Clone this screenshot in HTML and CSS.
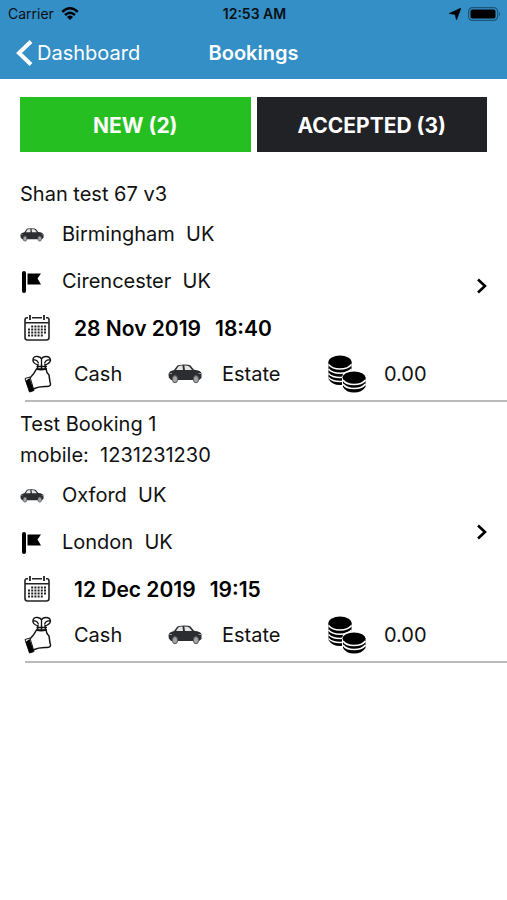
FILE: index.html
```html
<!DOCTYPE html>
<html lang="en">
<head>
<meta charset="utf-8">
<meta name="viewport" content="width=device-width, initial-scale=1">
<title>Bookings</title>
<link rel="stylesheet" href="styles.css">
</head>
<body>
<svg class="sprite" aria-hidden="true">
  <symbol id="car" viewBox="0 0 34 20">
    <path d="M.5 10Q1 7 6 6L9 2Q10 .5 16 .5Q21 .5 22.500 1.500L26 5.800Q33 6.500 33.500 9.500V14L31 16H3L.8 13.500Z" fill="#2b2d31"/>
    <path d="M8 6L10.300 2.500Q11 1.700 14.500 1.500L15 6ZM16.300 1.500Q20 1.500 21.300 2.500L24 6H17Z" fill="#e4e4e4"/>
    <path d="M1.500 9.500H4M30.500 9.500H33" stroke="#999"/>
    <ellipse cx="7" cy="15.200" rx="2.600" ry="3.600" fill="#a5a5a5" stroke="#55575a"/>
    <ellipse cx="28" cy="15.200" rx="2.600" ry="3.600" fill="#a5a5a5" stroke="#55575a"/>
  </symbol>
  <symbol id="flag" viewBox="0 0 20 22">
    <rect width="4" height="22" rx="2"/>
    <path d="M5.500 2.500H19L15.500 7.500L19 13.500H5.500Z"/>
  </symbol>
  <symbol id="calendar" viewBox="0 0 26 26">
    <path d="M4 2.800H3Q1 2.800 1 5V22.500Q1 25 3.500 25H22.500Q25 25 25 22.500V5Q25 2.800 23 2.800H22M8 2.800H18M1 7.800H25" fill="none" stroke="#222" stroke-width="1.600"/>
    <path d="M6 0V5M20 0V5" stroke="#222" stroke-width="1.800"/>
    <path d="M7.200 11.500H22.400M4 14.500H22.400M4 17.500H22.400M4 20.500H19" stroke="#222" stroke-width="1.900" stroke-dasharray="2 1.200"/>
  </symbol>
  <symbol id="cash" viewBox="0 0 28 38">
    <path d="M14 10Q8 8 9 4Q10 1 13.500 1.500Q17 2 17.500 4Q18.500 1.500 22 1.500Q26 1.500 26.500 5Q26.500 8 21 10M9 5Q13 4 14.500 8.500M17.500 4V9M26 5Q22 4 20.500 8.500" fill="none" stroke="#111" stroke-width="1.300"/>
    <path d="M14 9L13.500 14M21 9L21.500 14M17.500 9V14M12.500 11.500H23M13 14H23" stroke="#111" stroke-width="1.500"/>
    <path d="M6 23Q10 19 12.500 14Q17 15.500 22 14Q22.500 18 25 20L26 27Q28 31.500 23 31.500Q15 31 9 34" fill="#fff" stroke="#111" stroke-width="1.500"/>
    <path d="M1 23.500L6 22L10 35.500L5.500 37Z" fill="#fff" stroke="#111"/>
    <path d="M1.500 26L5.500 23L10 35.500L5.500 37Z"/>
  </symbol>
  <symbol id="coins" viewBox="0 0 38 38">
    <path d="M.5 6.500V24Q4 30 12 30Q20 30 23.500 24V6.500Z"/>
    <ellipse cx="12" cy="7" rx="11.500" ry="6.500"/>
    <path d="M.5 9.500Q4 14 12 14T23.500 9.500M.5 14Q4 18.300 12 18.300T23.500 14M.5 18.500Q4 22.500 12 22.500T23.500 18.500M.5 22.500Q4 26.500 12 26.500T23.500 22.500" fill="none" stroke="#fff" stroke-width="1.500"/>
    <path d="M14 22.500Q14 15 25.500 15T38 22.500V38H14Z" fill="#fff"/>
    <path d="M15 22.500V32Q18 37.500 26 37.500T37.500 32V22.500Z"/>
    <ellipse cx="26" cy="22.500" rx="11.500" ry="6"/>
    <path d="M15 25Q18 29.500 26 29.500T37.500 25M15 29Q18 33.500 26 33.500T37.500 29" fill="none" stroke="#fff" stroke-width="1.600"/>
  </symbol>
  <symbol id="next" viewBox="0 0 12 16">
    <path d="M2 1.500L9 8L2 14.500" fill="none" stroke="#000" stroke-width="2.600"/>
  </symbol>
</svg>

<header class="header">
  <div class="status">
    <span class="carrier">Carrier
      <svg width="18" height="13" viewBox="0 0 18 13" aria-hidden="true"><path d="M1.200 4.800Q9-2.200 16.800 4.800M4 8Q9 3.500 14 8" fill="none" stroke="#000" stroke-width="2.400"/><path d="M6 10Q9 7.200 12 10L9 13Z"/></svg>
    </span>
    <span class="time">12:53 AM</span>
    <span class="power">
      <svg width="12" height="12" viewBox="0 0 12 12" aria-hidden="true"><path d="M12 0L7.500 12L6 6.500L0 5.500Z" stroke="#000" stroke-width=".5"/></svg>
      <svg width="33" height="14" viewBox="0 0 33 14" aria-hidden="true"><rect x=".6" y=".6" width="29" height="12.800" rx="4" fill="none" stroke="#1c5577" stroke-width="1.200"/><rect x="2.500" y="2.500" width="25" height="9" rx="1.800"/><path d="M31 4.500Q33 7 31 9.500Z" fill="#1c5577"/></svg>
    </span>
  </div>
  <nav class="nav">
    <a class="back" href="#dashboard">
      <svg width="17" height="26" viewBox="0 0 17 26" aria-hidden="true"><path d="M15 1.500L3 13L15 24.500" fill="none" stroke="#fff" stroke-width="4"/></svg>
      Dashboard
    </a>
    <h1 class="title">Bookings</h1>
  </nav>
</header>

<main>
  <div class="tabs">
    <button class="tab tab-new" type="button">NEW (2)</button>
    <button class="tab tab-accepted" type="button">ACCEPTED (3)</button>
  </div>

  <article class="booking">
    <div class="details">
      <div class="name">Shan test 67 v3</div>
      <div class="rows">
        <div class="row place"><svg class="car-small"><use href="#car"/></svg><span>Birmingham&nbsp; UK</span></div>
        <div class="row place"><svg class="flag"><use href="#flag"/></svg><span>Cirencester&nbsp; UK</span></div>
        <div class="row when"><svg class="calendar"><use href="#calendar"/></svg><span>28 Nov 2019</span><span>18:40</span></div>
        <div class="row facts">
          <svg class="cash"><use href="#cash"/></svg><span>Cash</span>
          <svg class="car"><use href="#car"/></svg><span>Estate</span>
          <svg class="coins"><use href="#coins"/></svg><span>0.00</span>
        </div>
      </div>
    </div>
    <a class="next" href="#booking-1" aria-label="Open booking"><svg><use href="#next"/></svg></a>
  </article>

  <article class="booking">
    <div class="details">
      <div class="name">Test Booking 1</div>
      <div class="name">mobile:&nbsp; 1231231230</div>
      <div class="rows">
        <div class="row place"><svg class="car-small"><use href="#car"/></svg><span>Oxford&nbsp; UK</span></div>
        <div class="row place"><svg class="flag"><use href="#flag"/></svg><span>London&nbsp; UK</span></div>
        <div class="row when"><svg class="calendar"><use href="#calendar"/></svg><span>12 Dec 2019</span><span>19:15</span></div>
        <div class="row facts">
          <svg class="cash"><use href="#cash"/></svg><span>Cash</span>
          <svg class="car"><use href="#car"/></svg><span>Estate</span>
          <svg class="coins"><use href="#coins"/></svg><span>0.00</span>
        </div>
      </div>
    </div>
    <a class="next" href="#booking-2" aria-label="Open booking"><svg><use href="#next"/></svg></a>
  </article>
</main>
</body>
</html>
```
FILE: styles.css
```css
* { box-sizing: border-box; }

body {
  margin: 0;
  background: #fff;
  color: #111;
  font: 20px/31px Inter, "Liberation Sans", sans-serif;
}

svg { display: block; flex: none; }
.sprite { display: none; }

.header { background: #348fc6; color: #fff; }

.status {
  display: grid;
  grid-template-columns: 1fr auto 1fr;
  align-items: center;
  height: 27px;
  padding: 0 6px 0 8px;
  color: #0a1014;
  font-size: 14px;
  line-height: 20px;
}
.carrier, .power { display: flex; align-items: center; gap: 7px; }
.power { justify-content: flex-end; }
.time { font-weight: 600; }

.nav {
  display: grid;
  grid-template-columns: 1fr auto 1fr;
  align-items: center;
  height: 52px;
  padding: 0 16px;
}
.back {
  display: flex;
  align-items: center;
  gap: 4px;
  color: #fff;
  text-decoration: none;
}
.title { margin: 0; font-size: 20px; font-weight: 600; }

.tabs {
  display: grid;
  grid-template-columns: 1fr 1fr;
  gap: 6px;
  padding: 18px 20px 20px;
}
.tab {
  height: 55px;
  border: 0;
  padding: 2px 0 0;
  color: #fff;
  font: inherit;
  font-size: 21px;
  font-weight: 700;
}
.tab-new { background: #26bf21; }
.tab-accepted { background: #202226; }

.booking {
  display: flex;
  align-items: center;
  margin-left: 25px;
  padding: 7px 19px 3px 0;
  border-bottom: 2px solid #bbb;
}
.details { flex: 1; margin-left: -5px; }
.rows { margin-top: 1px; }
.row { display: grid; align-items: center; height: 46px; }
.place { grid-template-columns: 42px 1fr; height: 47px; }
.when {
  grid-template-columns: 50px auto 1fr;
  padding-left: 4px;
  color: #000;
  font-size: 21px;
  font-weight: 600;
}
.when span + span { margin-left: 14px; }
.facts {
  grid-template-columns: 50px 94px 54px 106px 56px 1fr;
  padding-left: 4px;
}

.car-small { width: 24px; height: 14px; }
.flag { width: 20px; height: 22px; margin-left: 2px; }
.calendar { width: 26px; height: 26px; }
.cash { width: 28px; height: 38px; }
.car { width: 34px; height: 20px; }
.coins { width: 38px; height: 38px; }

.next { display: block; padding-bottom: 4px; }
.next svg { width: 12px; height: 16px; }
```
